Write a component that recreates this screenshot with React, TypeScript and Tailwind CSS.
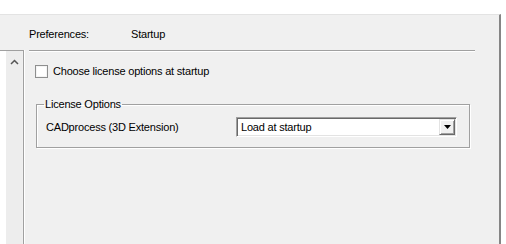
import React from "react";

export default function App() {
  return (
    <div
      className="w-[506px] h-[244px] bg-white pt-[14px] overflow-hidden text-[11px] leading-[13px] tracking-[-0.2px] text-black"
      style={{ fontFamily: '"Liberation Sans", Arial, sans-serif' }}
    >
      <div className="w-[501px] h-[230px] bg-[#f0f0f0] border-t border-t-[#e3e3e3] border-r-2 border-r-[#858585] flex">
        {/* left tree with scrollbar */}
        <div className="w-[24px] pt-[35px] flex flex-col">
          <div className="flex-1 flex border-t border-r border-[#a0a0a0] shadow-[1px_0_0_white]">
            <div className="w-[6px] bg-white" />
            <div className="w-[16px] bg-[#ededed] flex justify-center pt-[8px]">
              <svg width="9" height="6" viewBox="0 0 9 6" className="block">
                <path d="M1 5 L4.5 1.5 L8 5" fill="none" stroke="#555" strokeWidth="1.5" />
              </svg>
            </div>
          </div>
        </div>

        {/* main content */}
        <div className="flex-1 pl-[5px] flex flex-col">
          <div className="mt-[13px] flex h-[13px]">
            <span className="w-[102px]">Preferences:</span>
            <span>Startup</span>
          </div>
          <div className="mt-[9px] w-[446px] border-t border-t-[#a0a0a0] border-b border-b-white" />

          <label className="mt-[13px] ml-[6px] flex items-center h-[13px]">
            <span className="w-[13px] h-[13px] border border-[#8e8f8f] bg-white shadow-[inset_1px_1px_0_#f4f4f4,inset_-1px_-1px_0_#f4f4f4] inline-block" />
            <span className="ml-[5px]">Choose license options at startup</span>
          </label>

          <fieldset className="mt-[20px] ml-[7px] w-[434px] border border-[#a0a0a0] shadow-[inset_1px_1px_0_white,1px_1px_0_white] pb-[10px]">
            <legend className="ml-[7px] px-[1px] leading-[13px]">License Options</legend>
            <div className="mt-[6px] pl-[9px] pr-[11px] flex items-center h-[20px]">
              <span className="w-[190px]">CADprocess (3D Extension)</span>
              <div className="w-[221px] h-[20px] bg-white border border-t-[#a0a0a0] border-l-[#a0a0a0] border-r-white border-b-white shadow-[inset_1px_1px_0_#696969,inset_-1px_-1px_0_#e3e3e3] flex items-center pl-[4px] pr-[1px]">
                <span className="flex-1">Load at startup</span>
                <div className="w-[16px] h-[16px] bg-[#f0f0f0] border border-t-[#e3e3e3] border-l-[#e3e3e3] border-r-[#696969] border-b-[#696969] shadow-[inset_1px_1px_0_white,inset_-1px_-1px_0_#a0a0a0] flex items-center justify-center">
                  <svg width="7" height="4" viewBox="0 0 7 4" className="block">
                    <path d="M0 0 H7 L3.5 4 Z" fill="#000" />
                  </svg>
                </div>
              </div>
            </div>
          </fieldset>
        </div>
      </div>
    </div>
  );
}
